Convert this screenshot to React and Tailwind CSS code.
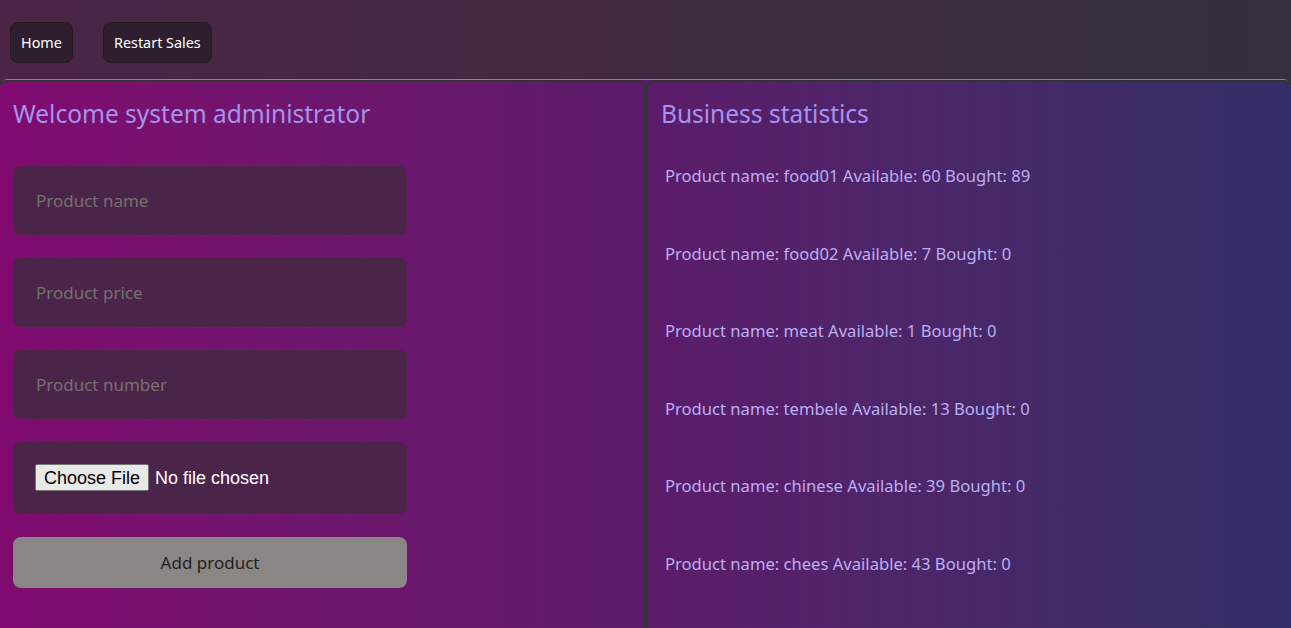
import React from "react";

const items = [
  ["food01", 60, 89],
  ["food02", 7, 0],
  ["meat", 1, 0],
  ["tembele", 13, 0],
  ["chinese", 39, 0],
  ["chees", 43, 0],
];

export default function App() {
  const font = { fontFamily: '"Noto Sans", "Open Sans", sans-serif' };
  return (
    <div
      className="h-screen w-full overflow-hidden bg-gradient-to-r from-[#4b2446] to-[#34303d]"
      style={font}
    >
      <nav className="h-[79px] pt-[22px] px-[10px] flex items-start gap-[30px]">
        <button className="h-[41px] px-[10px] rounded-lg bg-[#2f1f2e] border border-[#231a22] text-white text-[14.4px]">
          Home
        </button>
        <button className="h-[41px] px-[10px] rounded-lg bg-[#2f1f2e] border border-[#231a22] text-white text-[14.4px]">
          Restart Sales
        </button>
      </nav>
      <main className="border-t border-[#8d8790] rounded-t-lg bg-gradient-to-r from-[#800a70] via-[#5c1b6a] to-[#322f68] flex h-[620px]">
        <section className="-ml-[2px] w-[648px] shrink-0 border-2 border-[#333] rounded-lg pl-[13px] pt-[16px]">
          <h1 className="text-[24.5px] leading-[32px] text-[#a593ef]">Welcome system administrator</h1>
          <form className="mt-[36px] w-[394px] flex flex-col gap-[23px]" onSubmit={(e) => e.preventDefault()}>
            {["Product name", "Product price", "Product number"].map((p) => (
              <input
                key={p}
                placeholder={p}
                className="h-[69px] rounded-lg bg-[#4b2449] px-[23px] text-[17px] text-white placeholder:text-[#767070] outline-none"
              />
            ))}
            <div className="h-[72px] rounded-lg bg-[#4b2449] px-[22px] flex items-center">
              <input
                type="file"
                className="text-[18px] text-white file:mr-[6px] file:h-[27px] file:px-[8px] file:bg-[#e9e9e9] file:text-black file:border file:border-solid file:border-[#767676] file:rounded-[2px]"
                style={{ fontFamily: '"Liberation Sans", Arial, sans-serif' }}
              />
            </div>
            <button className="h-[51px] rounded-lg bg-[#8a8686] text-[17px] text-[#222]">
              Add product
            </button>
          </form>
        </section>
        <section className="flex-1 -mr-[2px] border-2 border-[#333] rounded-lg pl-[13px] pt-[16px]">
          <h2 className="text-[24.5px] leading-[32px] text-[#a593ef]">Business statistics</h2>
          <div className="mt-[8px] pl-[4px] flex flex-col">
            {items.map(([n, a, b]) => (
              <div key={n} className="h-[77.5px] flex items-center text-[16.6px] text-[#bcaef2]">
                Product name: {n} Available: {a} Bought: {b}
              </div>
            ))}
          </div>
        </section>
      </main>
    </div>
  );
}
